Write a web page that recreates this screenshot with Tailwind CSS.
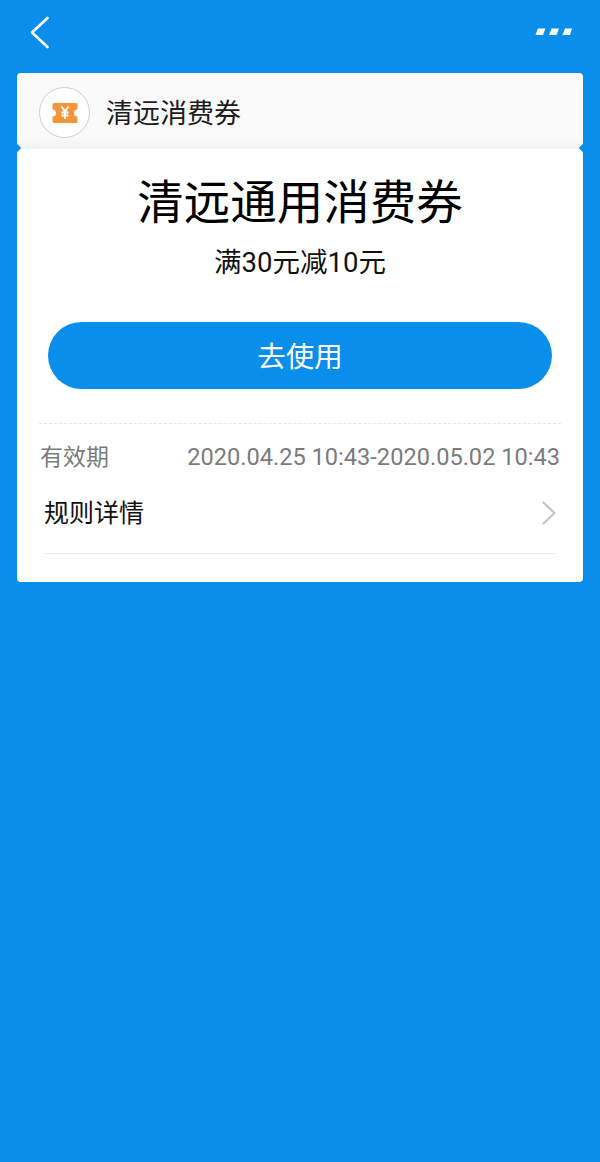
<!DOCTYPE html>
<html lang="zh">
<head>
  <meta charset="UTF-8" />
  <meta name="viewport" content="width=device-width, initial-scale=1.0"/>
  <title>清远消费券</title>
  <script src="https://cdn.jsdelivr.net/npm/@tailwindcss/browser@4"></script>
</head>
<body class="bg-[#0a8eec] font-['Roboto','Noto_Sans_CJK_SC',sans-serif]">
  <div class="w-[600px] h-[1162px] overflow-hidden">
    <!-- top bar -->
    <div class="h-[73px] flex justify-between items-start pl-[29px] pr-[28px]">
      <svg class="mt-[15px]" width="22" height="36" viewBox="0 0 22 36" fill="none" stroke="#fff" stroke-width="2.6" stroke-linecap="round" stroke-linejoin="round"><path d="M18.5 3 3 17.5 18.5 32"/></svg>
      <svg class="mt-[28px]" width="37" height="8" viewBox="0 0 37 8" fill="#fff"><path d="M3 0.5h7.5L8 7H0.5zM16.5 0.5H24L21.5 7H14zM30 0.5h7L35 7h-7.500z"/></svg>
    </div>

    <!-- card -->
    <div class="mx-[17px] w-[566px] relative">
      <div class="h-[76px] bg-linear-to-b from-[#f9f9f9] via-[#f9f9f9] via-85% to-[#f2f2f2] rounded-t-[4px] flex items-center pl-[22px] pt-[3px]">
        <div class="w-[51px] h-[51px] rounded-full bg-white border border-[#cfcfcf] flex items-center justify-center">
          <svg width="26" height="20" viewBox="0 0 26 20"><path fill="#f3953a" d="M2 0h22a1.500 1.500 0 0 1 1.500 1.500V6.500a3.500 3.500 0 0 0 0 7v5a1.500 1.500 0 0 1-1.500 1.500H2A1.500 1.500 0 0 1 .5 18.500v-5a3.500 3.500 0 0 0 0-7v-5A1.500 1.500 0 0 1 2 0z"/><path fill="none" stroke="#fff" stroke-width="2" d="M9.500 3.500 13 8.500l3.500-5M13 8.500V16M9.500 9.500h7M9.500 12.500h7"/></svg>
        </div>
        <span class="ml-[16px] mt-[3px] text-[27px] leading-none text-[#1c1c1c]">清远消费券</span>
      </div>
      <!-- notches -->
      <div class="absolute left-[-3px] top-[72px] w-[6px] h-[6px] rotate-45 bg-[#0a8eec]"></div>
      <div class="absolute right-[-3px] top-[72px] w-[6px] h-[6px] rotate-45 bg-[#0a8eec]"></div>

      <div class="h-[433px] bg-white rounded-b-[4px] pt-[26px]">
        <h1 class="text-center text-[46.5px] leading-[56px] text-black">清远通用消费券</h1>
        <p class="mt-[17px] text-center text-[27.5px] leading-[30px] text-[#111]">满30元减10元</p>
        <button class="block mx-auto mt-[44px] w-[504px] h-[67px] pt-[5px] rounded-full bg-[#0a8eec] text-white text-[28.5px]">去使用</button>
        <div class="mx-[22px] mt-[34px] border-t border-dashed border-[#e6e6e6]"></div>
        <div class="mx-[23px] mt-[19px] flex justify-between items-center h-[30px] text-[#7b7b7b]">
          <span class="text-[23px]">有效期</span>
          <span class="text-[23.6px]">2020.04.25 10:43-2020.05.02 10:43</span>
        </div>
        <div class="mx-[27px] mt-[10px] h-[71px] pb-[8px] border-b border-[#ececec] flex justify-between items-center">
          <span class="text-[25px] text-[#111]">规则详情</span>
          <svg class="mb-[2px]" width="14" height="24" viewBox="0 0 14 24" fill="none" stroke="#c8c8c8" stroke-width="2.400" stroke-linecap="round" stroke-linejoin="round"><path d="M1.500 1.500 12.500 12 1.500 22.500"/></svg>
        </div>
      </div>
    </div>
  </div>
</body>
</html>
